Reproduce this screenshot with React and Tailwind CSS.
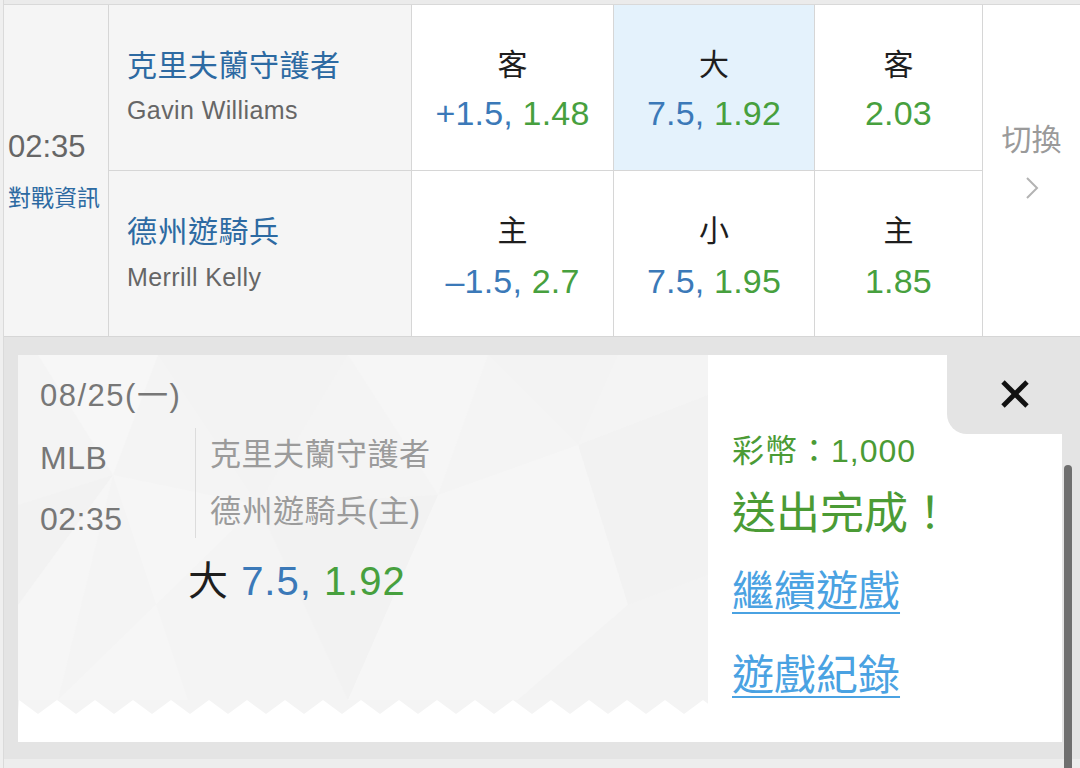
import React from "react";

const FONT = { fontFamily: '"Liberation Sans", "Noto Sans CJK TC", sans-serif' };

function Odds({ label, blue, green, highlight, row2 }) {
  return (
    <div
      className={`border-r border-b border-[#d6d6d6] flex flex-col items-center pt-[42px] ${
        highlight ? "bg-[#e4f2fc]" : "bg-white"
      }`}
    >
      <div className="text-[30px] leading-[36px] text-[#1e1e1e]">{label}</div>
      <div
        className={`text-[34px] leading-[38px] tracking-[0.2px] ${row2 ? "mt-[13px]" : "mt-[11px]"} whitespace-nowrap`}
      >
        {blue && <span className="text-[#3b79b8]">{blue}</span>}
        <span className="text-[#47a03e]">{green}</span>
      </div>
    </div>
  );
}

function Team({ name, pitcher, row2 }) {
  return (
    <div className="border-r border-b border-[#d6d6d6] bg-[#f5f5f5] pl-[18px] pt-[43px]">
      <div className="text-[30px] leading-[36px] text-[#2d6aa2] tracking-[0.5px]">{name}</div>
      <div
        className={`text-[25px] leading-[30px] tracking-[0.4px] text-[#666666] ${row2 ? "mt-[12px]" : "mt-[11px]"}`}
      >
        {pitcher}
      </div>
    </div>
  );
}

function Pattern() {
  return (
    <svg className="absolute inset-0" width="690" height="345" viewBox="0 0 690 345">
      <polygon points="20,0 140,0 95,120" fill="#f7f7f7" />
      <polygon points="95,120 0,250 0,150" fill="#f2f2f2" />
      <polygon points="140,0 330,0 240,150" fill="#f3f3f3" />
      <polygon points="240,150 95,120 170,345 40,345" fill="#f6f6f6" />
      <polygon points="330,0 470,0 420,140" fill="#f6f6f6" />
      <polygon points="420,140 240,150 330,345" fill="#f2f2f2" />
      <polygon points="470,0 600,0 560,90" fill="#f3f3f3" />
      <polygon points="560,90 690,40 690,220 610,250" fill="#f2f2f2" />
      <polygon points="420,140 560,90 610,250 500,345 330,345" fill="#f6f6f6" />
      <polygon points="610,250 690,220 690,345 500,345" fill="#f3f3f3" />
      <polygon points="0,250 95,120 40,345 0,345" fill="#f6f6f6" />
    </svg>
  );
}

function Zigzag() {
  const pts = ["0,14"];
  for (let k = 0; k * 38 <= 690 + 38; k++) {
    pts.push(`${k * 38 + 1},0`);
    pts.push(`${k * 38 + 20},14`);
  }
  pts.push("690,14");
  return (
    <svg className="block bg-[#f4f4f4]" width="690" height="14" viewBox="0 0 690 14">
      <polygon points={pts.join(" ")} fill="#ffffff" />
    </svg>
  );
}

export default function App() {
  return (
    <div className="w-[1080px] h-[768px] overflow-hidden flex bg-[#e4e4e4] relative" style={FONT}>
      <div className="w-[4px] shrink-0 bg-[#efefef] border-r border-[#dadada]" />
      <div className="flex-1 flex flex-col min-w-0">
        <div className="h-[5px] shrink-0 bg-[#ebebeb] border-b border-[#d9d9d9]" />
        <div className="grid grid-cols-[105px_303px_202px_201px_168px_1fr] grid-rows-[166px_166px] shrink-0">
          <div className="row-span-2 border-r border-b border-[#d6d6d6] bg-[#f5f5f5] flex flex-col justify-center pl-[4px]">
            <div className="text-[31px] leading-[34px] text-[#666666]">02:35</div>
            <div className="text-[23px] leading-[28px] text-[#2d6aa2] mt-[20px] whitespace-nowrap">對戰資訊</div>
          </div>
          <Team name="克里夫蘭守護者" pitcher="Gavin Williams" />
          <Odds label="客" blue="+1.5, " green="1.48" />
          <Odds label="大" blue="7.5, " green="1.92" highlight />
          <Odds label="客" green="2.03" />
          <div className="row-span-2 border-b border-[#d6d6d6] bg-white flex flex-col items-center pt-[118px]">
            <div className="text-[30px] leading-[34px] text-[#9a9a9a]">切換</div>
            <svg className="mt-[19px]" width="14" height="24" viewBox="0 0 14 24">
              <polyline points="2,2 12,12 2,22" fill="none" stroke="#b3b3b3" strokeWidth="2" />
            </svg>
          </div>
          <Team name="德州遊騎兵" pitcher="Merrill Kelly" row2 />
          <Odds label="主" blue="–1.5, " green="2.7" row2 />
          <Odds label="小" blue="7.5, " green="1.95" row2 />
          <Odds label="主" green="1.85" row2 />
        </div>

        <div className="flex-1 pt-[18px] pl-[14px] pr-[18px] flex flex-col">
          <div className="h-[387px] shrink-0 flex bg-white">
            <div className="w-[690px] flex flex-col">
              <div className="relative h-[345px] bg-[#f4f4f4] overflow-hidden">
                <Pattern />
                <div className="relative pl-[22px] pt-[23px]">
                  <div className="text-[31px] leading-[36px] tracking-[1.5px] text-[#777777]">08/25(一)</div>
                  <div className="flex mt-[14px] h-[110px]">
                    <div className="w-[155px] pt-[13px]">
                      <div className="text-[32px] leading-[34px] tracking-[0.5px] text-[#777777]">MLB</div>
                      <div className="text-[32px] leading-[34px] tracking-[0.5px] text-[#777777] mt-[27px]">02:35</div>
                    </div>
                    <div className="border-l border-[#dcdcdc] pl-[14px] pt-[9px]">
                      <div className="text-[31px] leading-[36px] tracking-[0.5px] text-[#9b9b9b] whitespace-nowrap">克里夫蘭守護者</div>
                      <div className="text-[31px] leading-[36px] tracking-[0.5px] text-[#9b9b9b] mt-[21px] whitespace-nowrap">德州遊騎兵(主)</div>
                    </div>
                  </div>
                  <div className="ml-[148px] mt-[20px] text-[40px] leading-[46px] tracking-[1px] whitespace-nowrap">
                    <span className="text-[#1e1e1e]">大 </span>
                    <span className="text-[#3b79b8]">7.5, </span>
                    <span className="text-[#47a03e]">1.92</span>
                  </div>
                </div>
              </div>
              <Zigzag />
            </div>
            <div className="flex-1 relative pl-[24px] pt-[78px]">
              <div className="absolute top-0 right-0 w-[115px] h-[79px] bg-[#e4e4e4] rounded-bl-[20px] flex items-center justify-center pl-[20px] pb-[2px]">
                <svg width="28" height="28" viewBox="0 0 28 28">
                  <line x1="2" y1="2" x2="26" y2="26" stroke="#111111" strokeWidth="4.8" />
                  <line x1="26" y1="2" x2="2" y2="26" stroke="#111111" strokeWidth="4.8" />
                </svg>
              </div>
              <div className="text-[32px] leading-[36px] tracking-[1px] text-[#4b9b35] whitespace-nowrap">彩幣：1,000</div>
              <div className="text-[44px] leading-[50px] text-[#4b9b35] mt-[20px] whitespace-nowrap">送出完成！</div>
              <div className="text-[42px] leading-[48px] text-[#4aa2e2] mt-[29px] underline underline-offset-[6px] decoration-2 whitespace-nowrap">
                繼續遊戲
              </div>
              <div className="text-[42px] leading-[48px] text-[#4aa2e2] mt-[36px] underline underline-offset-[6px] decoration-2 whitespace-nowrap">
                遊戲紀錄
              </div>
            </div>
          </div>
          <div className="flex-1" />
          <div className="h-[9px] shrink-0 bg-[#ededed] -ml-[14px] -mr-[18px]" />
        </div>
      </div>
      <div className="absolute left-[1064px] top-[465px] w-[8px] h-[320px] rounded-t-[4px] bg-[#6f6f6f]" />
    </div>
  );
}
